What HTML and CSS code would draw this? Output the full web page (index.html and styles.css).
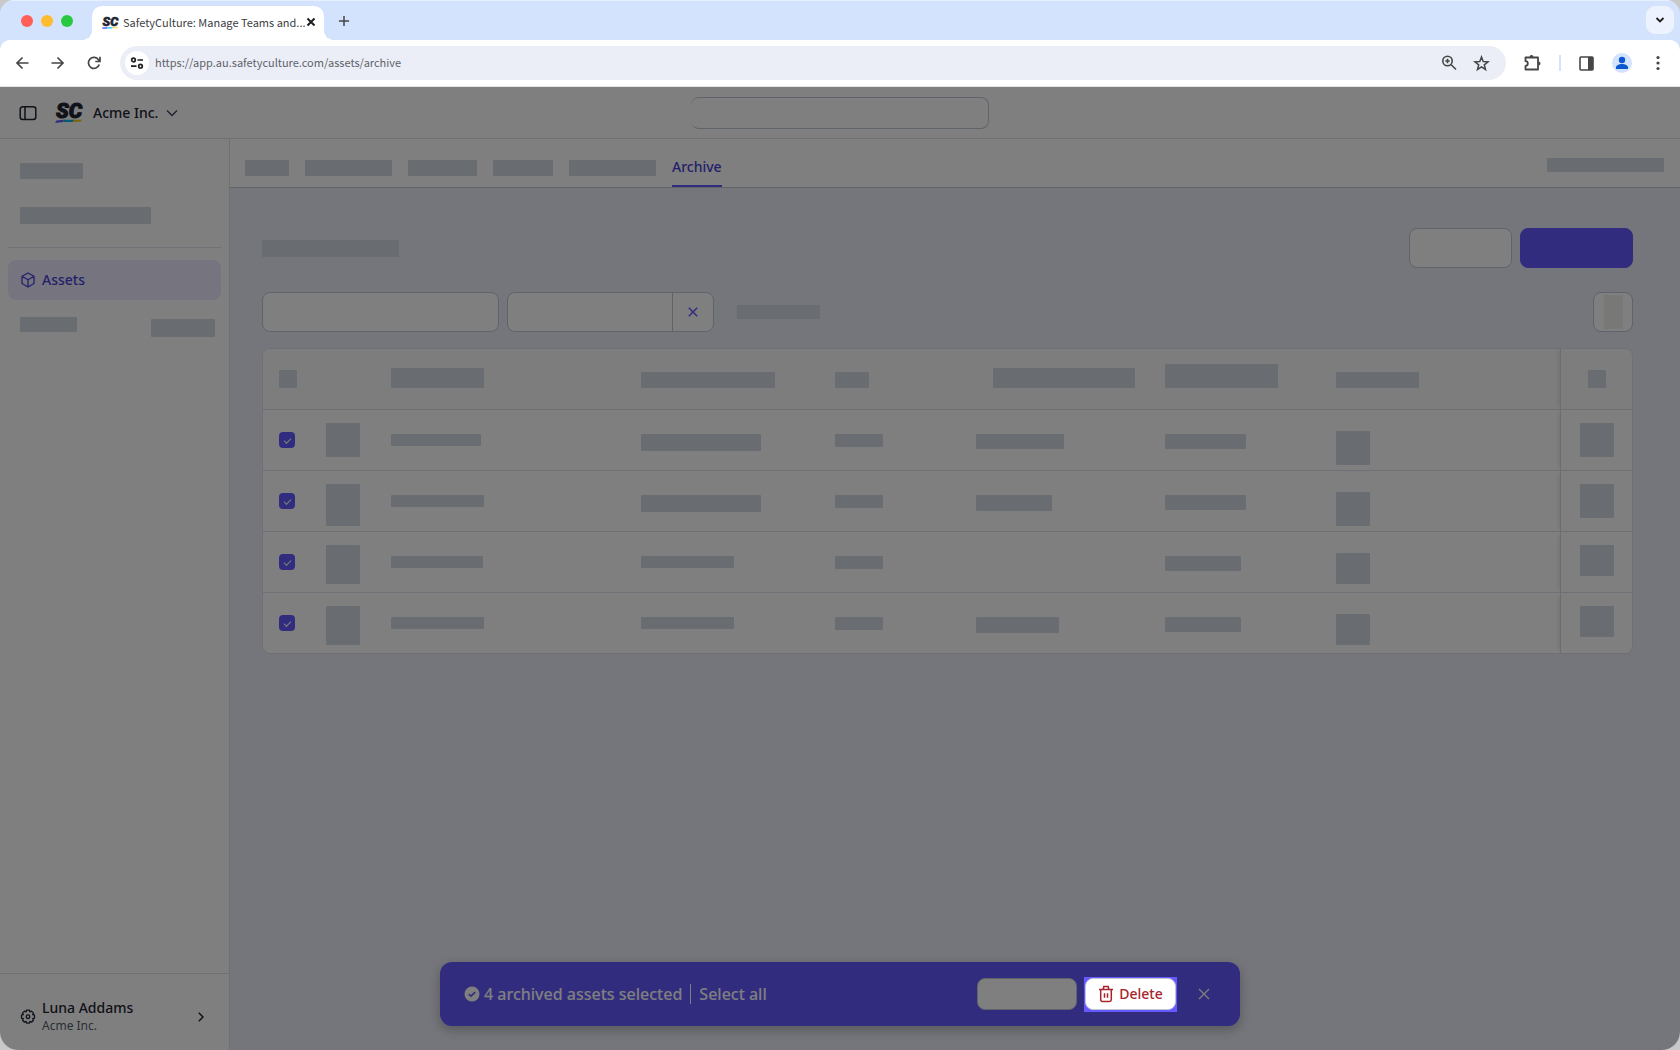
FILE: index.html
```html
<!DOCTYPE html>
<html lang="en">
<head>
    <meta charset="UTF-8">
    <meta name="viewport" content="width=device-width, initial-scale=1.0">
    <title>SafetyCulture: Manage Teams and Assets</title>
    <link rel="stylesheet" href="styles.css">
</head>
<body>
    <div class="browser">
        <div class="tab-strip">
            <div class="lights">
                <span class="light light-red"></span>
                <span class="light light-yellow"></span>
                <span class="light light-green"></span>
            </div>
            <div class="tab">
                <svg class="logo" width="18" height="13" viewBox="0 0 30 21">
                    <text class="logo-text" x="1" y="16">SC</text>
                    <path d="M1 18.500h8l-1 2.500H0z" fill="#6559ff"/><path d="M9 18.500h9l-1 2H8z" fill="#00d1ff"/><path d="M18 18.500h9l-1 1.500h-9z" fill="#ffd131"/>
                </svg>
                <span class="tab-title">SafetyCulture: Manage Teams and...</span>
                <button class="tab-close" aria-label="Close tab">
                    <svg width="10" height="10" viewBox="0 0 10 10" fill="none" stroke="#1f1f1f" stroke-width="2"><path d="M1.500 1.500l7 7M8.500 1.500l-7 7"/></svg>
                </button>
            </div>
            <button class="new-tab" aria-label="New tab">
                <svg width="12" height="12" viewBox="0 0 12 12" fill="none" stroke="#444746" stroke-width="1.500"><path d="M6 1v10M1 6h10"/></svg>
            </button>
            <button class="tab-search" aria-label="Search tabs">
                <svg width="10" height="10" viewBox="0 0 10 10" fill="none" stroke="#1f1f1f" stroke-width="1.800"><path d="M1.500 3l3.500 3.500L8.500 3"/></svg>
            </button>
        </div>

        <div class="toolbar">
            <div class="nav-buttons">
                <button class="tool" aria-label="Back">
                    <svg width="14" height="14" viewBox="0 0 14 14" fill="none" stroke="#444746" stroke-width="1.700"><path d="M13.500 7H2M7.500 1.500L2 7l5.500 5.500"/></svg>
                </button>
                <button class="tool" aria-label="Forward">
                    <svg width="14" height="14" viewBox="0 0 14 14" fill="none" stroke="#444746" stroke-width="1.700"><path d="M.5 7H12M6.500 1.500L12 7l-5.500 5.500"/></svg>
                </button>
                <button class="tool" aria-label="Reload">
                    <svg width="14" height="14" viewBox="0 0 14 14" fill="none" stroke="#444746" stroke-width="1.700"><path d="M12.200 8.500A5.500 5.500 0 1 1 11.500 3.800L12.800 5.200M13 .8v4.700H8.300"/></svg>
                </button>
            </div>
            <div class="address">
                <span class="site-info">
                    <svg width="14" height="12" viewBox="0 0 14 12" fill="none" stroke="#1f1f1f" stroke-width="1.700"><circle cx="3.500" cy="3" r="1.800"/><path d="M7.500 3h5.500M1 9.200h5.500"/><circle cx="10.500" cy="9.200" r="1.800"/></svg>
                </span>
                <input class="url" type="text" aria-label="Address" value="https://app.au.safetyculture.com/assets/archive">
                <svg width="16" height="16" viewBox="0 0 16 16" fill="none" stroke="#444746" stroke-width="1.600"><circle cx="6.500" cy="6" r="4.700"/><path d="M10 9.500l5 5M6.500 3.800v4.400M4.300 6h4.400"/></svg>
                <svg width="17" height="17" viewBox="0 0 17 17" fill="none" stroke="#444746" stroke-width="1.500"><path d="M8.500 2l1.700 4.500 4.800.3-3.700 3 1.200 4.700-4-2.600-4 2.600 1.200-4.700L2 6.800l4.800-.3z"/></svg>
            </div>
            <div class="extensions">
                <svg width="18" height="18" viewBox="0 0 18 18"><path d="M2.500 3.500h12.500v12h-12.500v-3.700a2.300 2.300 0 0 0 0-4.600z" fill="none" stroke="#444746" stroke-width="1.800" stroke-linejoin="round"/><path d="M6.500 3a2 2 0 0 1 4 0zM15.500 7.500a2 2 0 0 1 0 4z" fill="#444746"/></svg>
                <span class="tool-divider"></span>
                <svg width="15" height="15" viewBox="0 0 15 15"><rect x="1" y="1" width="13" height="13" rx="1" fill="none" stroke="#444746" stroke-width="1.600"/><path d="M9 1h5v13H9z" fill="#444746"/></svg>
                <svg width="20" height="20" viewBox="0 0 20 20"><circle cx="10" cy="10" r="10" fill="#d3e3fd"/><circle cx="10" cy="7" r="3.200" fill="#0b57d0"/><path d="M4 16v-1.500c0-2.300 3-3.500 6-3.500s6 1.200 6 3.500V16z" fill="#0b57d0"/></svg>
                <svg width="16" height="16" viewBox="0 0 16 16" fill="#444746"><circle cx="8" cy="2.500" r="1.600"/><circle cx="8" cy="8" r="1.600"/><circle cx="8" cy="13.500" r="1.600"/></svg>
            </div>
        </div>

        <div class="app">
            <header class="app-header">
                <div class="header-left">
                    <button class="icon-button" aria-label="Toggle sidebar">
                        <svg width="18" height="16" viewBox="0 0 18 16" fill="none" stroke="#1f2533" stroke-width="1.500"><rect x="1.200" y="1.800" width="15.600" height="12.600" rx="2.500"/><path d="M6 2v12.500"/></svg>
                    </button>
                    <button class="org">
                        <svg class="logo" width="30" height="21" viewBox="0 0 30 21">
                            <text class="logo-text" x="1" y="16">SC</text>
                            <path d="M1.500 18.500L9 17.800 8 20 0 21z" fill="#6559ff"/><path d="M9 17.800h10L18 20H8z" fill="#00b4e6"/><path d="M19 17.800h8L26 19.500l-8 .5z" fill="#ffc800"/>
                        </svg>
                        <span>Acme Inc.</span>
                        <svg width="12" height="8" viewBox="0 0 12 8" fill="none" stroke="#3f495a" stroke-width="1.500"><path d="M1 1.500l5 5 5-5"/></svg>
                    </button>
                </div>
                <input class="search" type="search" aria-label="Search">
            </header>

            <div class="app-body">
                <nav class="sidebar">
                    <div class="side-links">
                        <span class="bar bar-home"></span>
                        <span class="bar bar-section"></span>
                    </div>
                    <a class="side-active" href="#">
                        <svg width="16" height="16" viewBox="0 0 16 16" fill="none" stroke="#4740d4" stroke-width="1.300" stroke-linejoin="round"><path d="M8 1l6 3.300v7.200L8 15l-6-3.500V4.300zM2 4.300l6 3.500 6-3.500M8 7.800V15"/></svg>
                        Assets
                    </a>
                    <div class="side-more">
                        <span class="bar bar-more"></span>
                        <span class="bar bar-badge"></span>
                    </div>
                    <a class="user" href="#">
                        <svg width="16" height="16" viewBox="0 0 16 16" fill="none" stroke="#1f2533" stroke-width="1.300" stroke-linejoin="round"><path d="M6.600 1.200h2.800l.5 1.700 1.600-.8 2 2-.8 1.500 1.800.6v2.900l-1.800.5.8 1.600-2 2-1.600-.8-.5 1.800H6.600l-.5-1.800-1.600.8-2-2 .8-1.600-1.800-.5V6.200l1.800-.6-.8-1.500 2-2 1.600.8z"/><circle cx="8" cy="7.700" r="1.800"/></svg>
                        <span class="user-text">
                            <span class="user-name">Luna Addams</span>
                            <span class="user-org">Acme Inc.</span>
                        </span>
                        <svg width="6" height="10" viewBox="0 0 6 10" fill="none" stroke="#1f2533" stroke-width="1.500"><path d="M.8.8L5 5 .8 9.200"/></svg>
                    </a>
                </nav>

                <main class="main">
                    <div class="tabs">
                        <span class="bar tab-bar w44"></span>
                        <span class="bar tab-bar w87"></span>
                        <span class="bar tab-bar w69"></span>
                        <span class="bar tab-bar w60"></span>
                        <span class="bar tab-bar w87"></span>
                        <a class="tab-active" href="#">Archive</a>
                        <span class="bar tabs-right"></span>
                    </div>

                    <div class="content">
                        <div class="title-row">
                            <span class="bar page-title"></span>
                            <button class="button button-light" aria-label="More options"></button>
                            <button class="button button-primary" aria-label="Create"></button>
                        </div>

                        <div class="filter-row">
                            <input class="field field-search" type="text" aria-label="Search assets">
                            <div class="field filter">
                                <button class="filter-value" aria-label="Filter"></button>
                                <button class="filter-clear" aria-label="Remove filter">
                                    <svg width="10" height="10" viewBox="0 0 10 10" fill="none" stroke="#6559ff" stroke-width="1.500"><path d="M.8.800l8.400 8.400M9.200.8L.8 9.200"/></svg>
                                </button>
                            </div>
                            <span class="bar filter-add"></span>
                            <button class="field columns-button" aria-label="Columns"><span class="columns-icon"></span></button>
                        </div>

                        <div class="table-card">
                            <table class="assets">
                                <colgroup>
                                    <col class="col-check"><col class="col-thumb"><col class="col-name"><col class="col-type"><col class="col-code"><col class="col-site"><col class="col-date"><col><col class="col-menu">
                                </colgroup>
                                <thead>
                                    <tr>
                                        <th><span class="bar w18 h18"></span></th>
                                        <th></th>
                                        <th><span class="bar w93 h20"></span></th>
                                        <th><span class="bar w134 h16"></span></th>
                                        <th><span class="bar w34 h16"></span></th>
                                        <th class="right"><span class="bar w142 h20"></span></th>
                                        <th><span class="bar w113 h24"></span></th>
                                        <th><span class="bar w83 h16"></span></th>
                                        <th class="menu"><span class="bar w18 h18"></span></th>
                                    </tr>
                                </thead>
                                <tbody>
                                    <tr>
                                        <td class="check"><input type="checkbox" aria-label="Select asset 1" checked></td>
                                        <td class="thumb"><span class="bar w34 h34"></span></td>
                                        <td><span class="bar w90 h12"></span></td>
                                        <td><span class="bar w120 h17"></span></td>
                                        <td><span class="bar w48 h13"></span></td>
                                        <td><span class="bar w88 h15"></span></td>
                                        <td><span class="bar w81 h15"></span></td>
                                        <td class="owner"><span class="bar w34 h34"></span></td>
                                        <td class="menu"><span class="bar w34 h34"></span></td>
                                    </tr>
                                    <tr>
                                        <td class="check"><input type="checkbox" aria-label="Select asset 2" checked></td>
                                        <td class="thumb"><span class="bar w34 h42"></span></td>
                                        <td><span class="bar w93 h12"></span></td>
                                        <td><span class="bar w120 h17"></span></td>
                                        <td><span class="bar w48 h13"></span></td>
                                        <td><span class="bar w76 h16"></span></td>
                                        <td><span class="bar w81 h15"></span></td>
                                        <td class="owner"><span class="bar w34 h34"></span></td>
                                        <td class="menu"><span class="bar w34 h34"></span></td>
                                    </tr>
                                    <tr>
                                        <td class="check"><input type="checkbox" aria-label="Select asset 3" checked></td>
                                        <td class="thumb"><span class="bar w34 h39"></span></td>
                                        <td><span class="bar w92 h12"></span></td>
                                        <td><span class="bar w93 h12"></span></td>
                                        <td><span class="bar w48 h13"></span></td>
                                        <td></td>
                                        <td><span class="bar w76 h15"></span></td>
                                        <td class="owner"><span class="bar w34 h31"></span></td>
                                        <td class="menu"><span class="bar w34 h31"></span></td>
                                    </tr>
                                    <tr>
                                        <td class="check"><input type="checkbox" aria-label="Select asset 4" checked></td>
                                        <td class="thumb"><span class="bar w34 h39"></span></td>
                                        <td><span class="bar w93 h12"></span></td>
                                        <td><span class="bar w93 h12"></span></td>
                                        <td><span class="bar w48 h13"></span></td>
                                        <td><span class="bar w83 h16"></span></td>
                                        <td><span class="bar w76 h15"></span></td>
                                        <td class="owner"><span class="bar w34 h31"></span></td>
                                        <td class="menu"><span class="bar w34 h31"></span></td>
                                    </tr>
                                </tbody>
                            </table>
                        </div>
                    </div>
                </main>
            </div>

            <div class="bulk-bar">
                <svg width="16" height="16" viewBox="0 0 16 16"><circle cx="8" cy="8" r="7.500" fill="#fff"/><path d="M4.800 8.200l2.200 2 4.200-4" fill="none" stroke="#6559ff" stroke-width="1.700"/></svg>
                <span class="bulk-count">4 archived assets selected</span>
                <button class="select-all">Select all</button>
                <button class="bulk-button bulk-restore" aria-label="Restore"></button>
                <div class="spotlight">
                    <button class="bulk-button bulk-delete">
                        <svg width="16" height="18" viewBox="0 0 16 18" fill="none" stroke="#a8242a" stroke-width="1.500"><path d="M1 4.500h14M2.700 4.500v10.300a1.700 1.700 0 0 0 1.700 1.700h7.200a1.700 1.700 0 0 0 1.700-1.700V4.500M5.200 4.500l.6-3h4.400l.6 3M6.500 8.200v4.500M9.500 8.200v4.500"/></svg>
                        Delete
                    </button>
                </div>
                <button class="bulk-close" aria-label="Clear selection">
                    <svg width="12" height="12" viewBox="0 0 12 12" fill="none" stroke="#fff" stroke-width="1.300"><path d="M1 1l10 10M11 1L1 11"/></svg>
                </button>
            </div>
        </div>
    </div>
</body>
</html>
```
FILE: styles.css
```css
* {
    box-sizing: border-box;
}

body {
    margin: 0;
    background-color: #c8c8c8;
    font-family: "Noto Sans", sans-serif;
    font-size: 14px;
    color: #1f2533;
}

button {
    display: flex;
    align-items: center;
    justify-content: center;
    padding: 0;
    border: none;
    background: none;
    font: inherit;
    color: inherit;
    cursor: pointer;
}

a {
    color: inherit;
    text-decoration: none;
}

svg {
    flex-shrink: 0;
}

.browser {
    display: flex;
    flex-direction: column;
    height: 100vh;
    overflow: hidden;
    border-radius: 14px 14px 18px 18px;
    background-color: #d3e3fd;
}

/* window tabs */
.tab-strip {
    display: flex;
    align-items: flex-end;
    height: 40px;
    padding: 0 6px 0 21px;
    border-top: 1px solid #e6effe;
    font-family: "Noto Sans CJK SC", sans-serif;
}

.lights {
    display: flex;
    gap: 8px;
    width: 71px;
    padding-bottom: 13px;
}

.light {
    width: 12px;
    height: 12px;
    border-radius: 50%;
}

.light-red {
    background-color: #ff5f57;
}

.light-yellow {
    background-color: #febc2e;
}

.light-green {
    background-color: #28c840;
}

.tab {
    position: relative;
    display: flex;
    align-items: center;
    width: 232px;
    height: 34px;
    padding: 0 11px 2px 10px;
    border-radius: 10px 10px 0 0;
    background-color: #fff;
}

/* curved feet of the open tab */
.tab::before,
.tab::after {
    content: "";
    position: absolute;
    bottom: 0;
    width: 10px;
    height: 10px;
}

.tab::before {
    left: -10px;
    background: radial-gradient(circle at 0 0, transparent 10px, #fff 10px);
}

.tab::after {
    right: -10px;
    background: radial-gradient(circle at 100% 0, transparent 10px, #fff 10px);
}

.logo {
    overflow: visible;
}

.logo-text {
    font-family: Roboto, sans-serif;
    font-size: 21px;
    font-weight: 900;
    font-style: italic;
    fill: #1f2533;
    stroke: #1f2533;
    stroke-width: 1px;
}

.tab-title {
    flex: 1;
    margin-left: 3px;
    font-size: 11px;
    line-height: 16px;
    color: #3c4043;
    white-space: nowrap;
}

.new-tab {
    width: 40px;
    height: 38px;
}

.tab-search {
    width: 28px;
    height: 28px;
    margin: 0 0 6px auto;
    border-radius: 9px;
    background-color: #ecf3fe;
}

/* address bar */
.toolbar {
    display: flex;
    align-items: center;
    height: 47px;
    border-bottom: 1px solid #e1e3e8;
    border-radius: 10px 10px 0 0;
    background-color: #fff;
}

.nav-buttons {
    display: flex;
    gap: 22px;
    width: 120px;
    padding-left: 15px;
}

.address {
    display: flex;
    flex: 1;
    align-items: center;
    gap: 16px;
    height: 34px;
    padding: 0 16px 0 5px;
    border-radius: 17px;
    background-color: #ebeef7;
}

.site-info {
    display: flex;
    align-items: center;
    justify-content: center;
    width: 24px;
    height: 24px;
    border-radius: 50%;
    background-color: #fff;
}

.url {
    flex: 1;
    height: 24px;
    margin-left: -10px;
    padding: 0 0 2px;
    border: none;
    background: none;
    font-family: "Noto Sans CJK SC", sans-serif;
    font-size: 11px;
    color: #5f6368;
}

.extensions {
    display: flex;
    align-items: center;
    gap: 18px;
    padding: 0 14px 0 17px;
}

.tool-divider {
    width: 2px;
    height: 16px;
    background-color: #d3e3fd;
}

/* app */
.app {
    position: relative;
    display: flex;
    flex: 1;
    flex-direction: column;
    overflow: hidden;
    background-color: #fff;
}

.app-header {
    display: grid;
    grid-template-columns: 1fr 298px 1fr;
    align-items: center;
    height: 52px;
    padding: 0 19px;
    border-bottom: 1px solid #dfe1ec;
}

.header-left {
    display: flex;
    align-items: center;
    gap: 18px;
}

.org {
    gap: 8px;
    font-weight: 500;
}

.search {
    height: 32px;
    border: 1px solid #bfc6d4;
    border-left: none;
    border-radius: 8px;
    background-color: #fff;
}

.app-body {
    display: flex;
    flex: 1;
}

.bar {
    display: block;
    border-radius: 1px;
    background-color: #d2d8e0;
}

.sidebar {
    display: flex;
    flex-direction: column;
    width: 230px;
    border-right: 1px solid #dfe1ec;
}

.side-links {
    display: flex;
    flex-direction: column;
    gap: 28px;
    margin: 0 8px;
    padding: 24px 12px 23px;
    border-bottom: 1px solid #dfe1ec;
}

.bar-home {
    width: 63px;
    height: 16px;
}

.bar-section {
    width: 131px;
    height: 17px;
}

.side-active {
    display: flex;
    align-items: center;
    gap: 6px;
    height: 40px;
    margin: 12px 8px 0;
    padding: 0 12px 1px;
    border-radius: 8px;
    background-color: #edebff;
    font-weight: 500;
    color: #4740d4;
}

.side-more {
    display: flex;
    justify-content: space-between;
    padding: 17px 14px 0 20px;
}

.bar-more {
    width: 57px;
    height: 15px;
}

.bar-badge {
    width: 64px;
    height: 18px;
    margin-top: 2px;
}

.user {
    display: flex;
    align-items: center;
    gap: 6px;
    height: 77px;
    margin-top: auto;
    padding: 9px 25px 0 20px;
    border-top: 1px solid #dfe1ec;
}

.user-text {
    display: flex;
    flex: 1;
    flex-direction: column;
}

.user-name {
    font-weight: 500;
    line-height: 18px;
}

.user-org {
    font-size: 12px;
    line-height: 18px;
    color: #545f70;
}

.main {
    flex: 1;
    background-color: #ebecf6;
}

.tabs {
    display: flex;
    gap: 16px;
    height: 49px;
    padding: 0 16px 0 15px;
    border-bottom: 1px solid #bfc6d4;
    background-color: #fff;
}

.tab-bar {
    height: 16px;
    margin-top: 21px;
}

.tab-active {
    padding-top: 18px;
    border-bottom: 2px solid #6559ff;
    font-weight: 500;
    line-height: 20px;
    color: #4740d4;
}

.tabs-right {
    width: 117px;
    height: 14px;
    margin: 19px 0 0 auto;
}

.content {
    padding: 40px 47px 40px 32px;
}

.title-row,
.filter-row {
    display: flex;
    align-items: center;
    gap: 8px;
}

.page-title {
    width: 137px;
    height: 17px;
    margin-right: auto;
}

.button,
.field {
    height: 40px;
    border: 1px solid #bfc6d4;
    border-radius: 8px;
    background-color: #fff;
}

.button-light {
    width: 103px;
}

.button-primary {
    width: 113px;
    border-color: #6559ff;
    background-color: #6559ff;
}

.filter-row {
    margin: 24px 0 16px;
}

.field-search {
    width: 237px;
}

.filter {
    display: flex;
    width: 207px;
}

.filter-value {
    flex: 1;
}

.filter-clear {
    width: 41px;
    border-left: 1px solid #bfc6d4;
}

.filter-add {
    width: 83px;
    height: 14px;
    margin-left: 15px;
}

.columns-button {
    width: 40px;
    margin-left: auto;
}

.columns-icon {
    width: 19px;
    height: 34px;
    background-color: #f0f0ef;
}

.table-card {
    overflow: hidden;
    border: 1px solid #dfe1ec;
    border-radius: 8px;
    background-color: #fff;
}

.assets {
    width: 100%;
    table-layout: fixed;
    border-collapse: separate;
    border-spacing: 0;
}

.col-check { width: 47px; }
.col-thumb { width: 65px; }
.col-name { width: 250px; }
.col-type { width: 194px; }
.col-code { width: 141px; }
.col-site { width: 189px; }
.col-date { width: 171px; }
.col-menu { width: 72px; }

.assets th {
    height: 61px;
    padding: 0 14px 21px 16px;
    border-bottom: 1px solid #dfe1ec;
    background-color: #fafafc;
    vertical-align: bottom;
}

.assets td {
    height: 61px;
    padding: 24px 0 0 16px;
    border-bottom: 1px solid #dfe1ec;
    vertical-align: top;
}

.assets tr:last-child td {
    height: 60px;
    border-bottom: none;
}

.assets .right .bar {
    margin-left: auto;
}

.assets td.check {
    padding-top: 22px;
}

.assets td.thumb {
    padding-top: 13px;
}

.assets td.owner {
    padding-top: 21px;
}

.assets .menu {
    padding-right: 0;
    padding-left: 0;
    border-left: 1px solid #d8dbe6;
    box-shadow: -4px 0 4px -3px rgba(31, 37, 51, 0.12);
}

.assets td.menu {
    padding-top: 13px;
}

.menu .bar {
    margin: 0 auto;
}

.assets input {
    display: block;
    width: 16px;
    height: 16px;
    margin: 0;
    appearance: none;
    border-radius: 4px;
    background-color: #6559ff;
}

.assets input:checked::before {
    content: "";
    display: block;
    width: 6px;
    height: 3px;
    margin: 6px 5px;
    border-bottom: 1px solid #fff;
    border-left: 1px solid #fff;
    transform: rotate(-45deg);
}

/* placeholder sizes */
.w18 { width: 18px; }
.w34 { width: 34px; }
.w44 { width: 44px; }
.w48 { width: 48px; }
.w60 { width: 60px; }
.w69 { width: 69px; }
.w76 { width: 76px; }
.w81 { width: 81px; }
.w83 { width: 83px; }
.w87 { width: 87px; }
.w88 { width: 88px; }
.w90 { width: 90px; }
.w92 { width: 92px; }
.w93 { width: 93px; }
.w113 { width: 113px; }
.w120 { width: 120px; }
.w134 { width: 134px; }
.w142 { width: 142px; }
.h12 { height: 12px; }
.h13 { height: 13px; }
.h15 { height: 15px; }
.h16 { height: 16px; }
.h17 { height: 17px; }
.h18 { height: 18px; }
.h20 { height: 20px; }
.h24 { height: 24px; }
.h31 { height: 31px; }
.h34 { height: 34px; }
.h39 { height: 39px; }
.h42 { height: 42px; }

/* floating selection bar */
.bulk-bar {
    position: absolute;
    right: 0;
    bottom: 24px;
    left: 0;
    display: flex;
    align-items: center;
    width: 800px;
    height: 64px;
    margin: 0 auto;
    padding: 0 30px 0 24px;
    border-radius: 12px;
    background-color: #6559ff;
    box-shadow: 0 4px 12px rgba(31, 37, 51, 0.3);
    font-size: 16px;
    font-weight: 500;
    color: #fff;
}

.bulk-count {
    margin: 0 8px 0 4px;
}

.select-all {
    height: 20px;
    padding-left: 8px;
    border-left: 1px solid #fff;
}

.bulk-button {
    height: 32px;
    border: 1px solid #bfc6d4;
    border-radius: 8px;
    background-color: #fff;
}

.bulk-restore {
    width: 100px;
    margin: 0 7px 0 auto;
}

/* dims everything in the app apart from the delete button */
.spotlight {
    position: relative;
    z-index: 1;
    padding: 1px 1px 2px;
    background-color: #6559ff;
    box-shadow: 0 0 0 3000px rgba(0, 0, 0, 0.5);
}

.bulk-delete {
    gap: 5px;
    width: 91px;
    font-size: 14px;
    color: #a8242a;
}

.bulk-close {
    width: 12px;
    height: 12px;
    margin-left: 21px;
}
```
